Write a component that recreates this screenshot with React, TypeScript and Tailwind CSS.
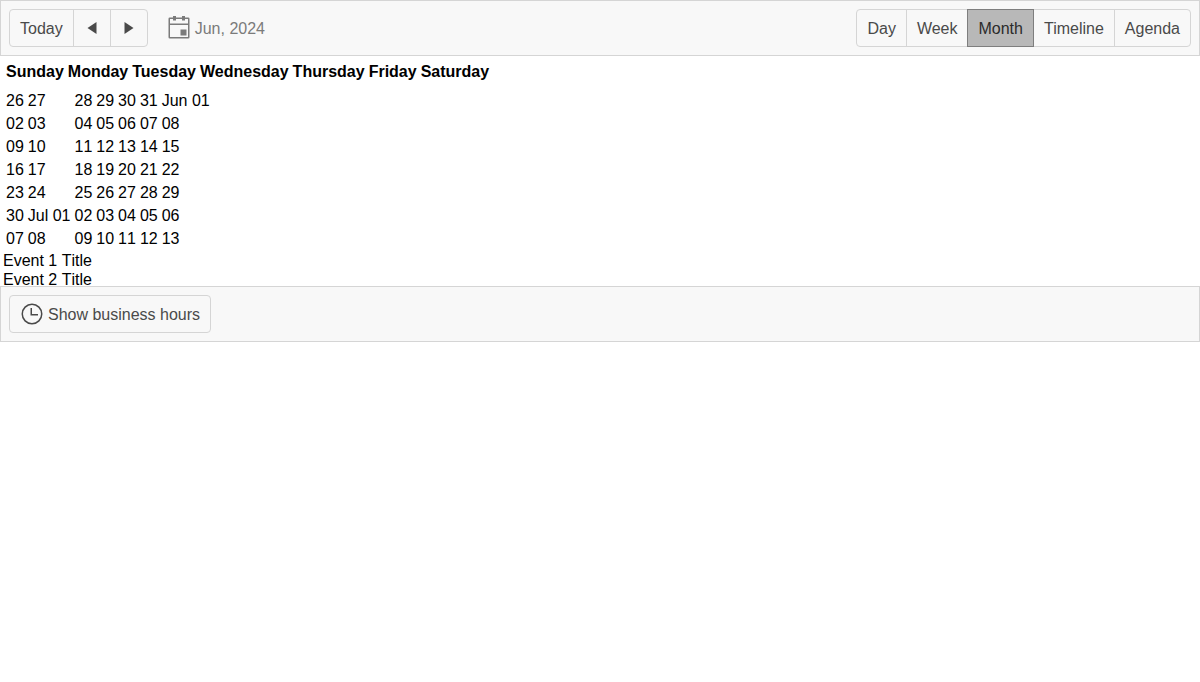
import React from 'react';

const dayNames = ['Sunday', 'Monday', 'Tuesday', 'Wednesday', 'Thursday', 'Friday', 'Saturday'];

const weeks = [
  ['26', '27', '28', '29', '30', '31', 'Jun 01'],
  ['02', '03', '04', '05', '06', '07', '08'],
  ['09', '10', '11', '12', '13', '14', '15'],
  ['16', '17', '18', '19', '20', '21', '22'],
  ['23', '24', '25', '26', '27', '28', '29'],
  ['30', 'Jul 01', '02', '03', '04', '05', '06'],
  ['07', '08', '09', '10', '11', '12', '13'],
];

const views = ['Day', 'Week', 'Month', 'Timeline', 'Agenda'];

const buttonClass =
  'flex h-[38px] items-center justify-center border border-[#d5d5d5] px-[10px] -ml-px first:ml-0 first:rounded-l last:rounded-r whitespace-nowrap';

function ArrowIcon({ points }: { points: string }) {
  return (
    <svg className="size-4" viewBox="0 0 16 16" fill="currentColor">
      <polygon points={points} />
    </svg>
  );
}

function CalendarIcon() {
  return (
    <svg className="size-6" viewBox="0 0 24 24" fill="none" stroke="currentColor" strokeWidth="1.5">
      <rect x="2.25" y="2.25" width="19.5" height="19.5" rx="0.5" />
      <path d="M2.25 8.25h19.5" />
      <path d="M7.5 0v4.5M16.5 0v4.5" strokeWidth="3" />
      <rect x="13.5" y="13.5" width="6" height="6" fill="currentColor" stroke="none" />
    </svg>
  );
}

function ClockIcon() {
  return (
    <svg className="size-6" viewBox="0 0 24 24" fill="none" stroke="currentColor" strokeWidth="1.5">
      <circle cx="12" cy="12" r="9.75" />
      <path d="M11.25 6v6.75H18" />
    </svg>
  );
}

function Toolbar() {
  return (
    <div className="flex h-14 items-center border border-[#d5d5d5] bg-[#f8f8f8] px-2 text-[#4a4a4a]">
      <div className="flex">
        <button className={buttonClass}>Today</button>
        <button className={buttonClass} aria-label="Previous">
          <ArrowIcon points="3.5,8 12.5,2 12.5,14" />
        </button>
        <button className={buttonClass} aria-label="Next">
          <ArrowIcon points="12.5,8 3.5,2 3.5,14" />
        </button>
      </div>
      <div className="ml-[19px] flex items-center gap-1 text-[#7b7b7b]">
        <CalendarIcon />
        <span>Jun, 2024</span>
      </div>
      <div className="ml-auto flex">
        {views.map((view) => (
          <button
            key={view}
            className={
              view === 'Month'
                ? `${buttonClass} relative z-10 border-[#7e7e7e]! bg-[#b8b8b8] text-[#2b2b2b]`
                : buttonClass
            }
          >
            {view}
          </button>
        ))}
      </div>
    </div>
  );
}

function MonthView() {
  return (
    <div className="h-[230px] overflow-hidden">
      <table className="border-separate border-spacing-[2px]">
        <tbody>
          <tr>
            <td className="p-px">
              <table className="border-separate border-spacing-[2px]">
                <tbody>
                  <tr>
                    {dayNames.map((name) => (
                      <th key={name} className="p-px font-bold">
                        {name}
                      </th>
                    ))}
                  </tr>
                </tbody>
              </table>
            </td>
          </tr>
          <tr>
            <td className="p-px [font-kerning:none]">
              <table className="border-separate border-spacing-[2px]">
                <tbody>
                  {weeks.map((week, row) => (
                    <tr key={row}>
                      {week.map((day) => (
                        <td key={day} className="p-px">
                          {day}
                        </td>
                      ))}
                    </tr>
                  ))}
                </tbody>
              </table>
              <div>Event 1 Title</div>
              <div>Event 2 Title</div>
            </td>
          </tr>
        </tbody>
      </table>
    </div>
  );
}

export default function App() {
  return (
    <div className="bg-white font-['Liberation_Sans',Arial,sans-serif] text-base leading-[19px] text-black">
      <Toolbar />
      <MonthView />
      <div className="flex h-14 items-center border border-[#d5d5d5] bg-[#f8f8f8] px-2 text-[#4a4a4a]">
        <button className={`${buttonClass} gap-1`}>
          <ClockIcon />
          <span>Show business hours</span>
        </button>
      </div>
    </div>
  );
}
